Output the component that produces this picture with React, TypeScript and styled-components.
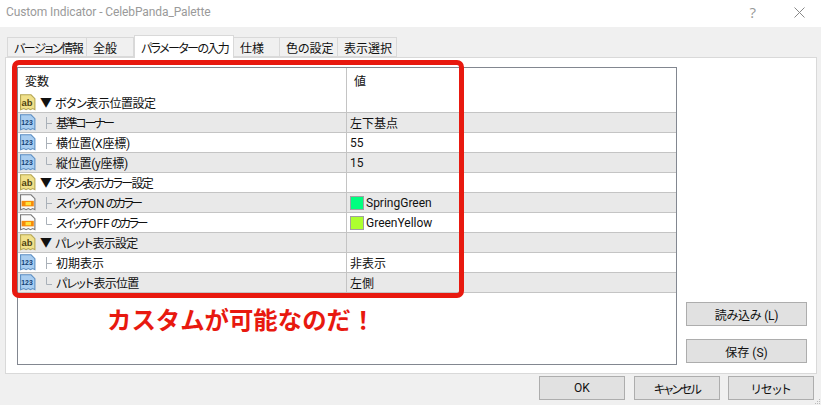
import styled, { createGlobalStyle } from "styled-components";

const GlobalStyle = createGlobalStyle`
  html, body {
    margin: 0;
    padding: 0;
    background: #f0f0f0;
  }
  * {
    box-sizing: border-box;
  }
`;

const JP = `Roboto, "Noto Sans CJK JP", "Noto Sans", sans-serif`;

const Dialog = styled.div`
  width: 821px;
  height: 405px;
  position: relative;
  overflow: hidden;
  display: flex;
  flex-direction: column;
  background: #f0f0f0;
  font-family: ${JP};
  font-feature-settings: "palt";
  font-size: 12px;
  color: #111;
`;

const TitleBar = styled.div`
  height: 27px;
  flex: none;
  background: #fff;
  display: flex;
  align-items: center;
  padding: 0 16px 3px 6px;
`;

const Title = styled.div`
  flex: 1;
  font-family: Roboto, sans-serif;
  font-size: 12px;
  letter-spacing: -0.1px;
  color: #9a9a9a;
`;

const HelpMark = styled.span`
  font-family: "Open Sans", sans-serif;
  font-size: 15px;
  color: #999;
  margin-right: 38px;
`;

const TabRow = styled.div`
  height: 30px;
  flex: none;
  display: flex;
  align-items: flex-end;
  padding-left: 7px;
  position: relative;
  z-index: 1;
`;

const Tab = styled.div<{ $w: number; $active?: boolean; $track?: number }>`
  width: ${(p) => p.$w}px;
  height: ${(p) => (p.$active ? 23 : 20)}px;
  margin-bottom: ${(p) => (p.$active ? -1 : 0)}px;
  padding-left: 6px;
  background: ${(p) => (p.$active ? "#fff" : "#f0f0f0")};
  border: 1px solid #d9d9d9;
  border-bottom: ${(p) => (p.$active ? "none" : "1px solid #d9d9d9")};
  border-left: ${(p) => (p.$active ? "1px solid #d9d9d9" : "none")};
  display: flex;
  align-items: center;
  white-space: nowrap;
  font-size: 12px;
  letter-spacing: ${(p) => p.$track ?? 0}px;
  &:first-child {
    border-left: 1px solid #d9d9d9;
  }
`;

const Panel = styled.div`
  width: 812px;
  height: 317px;
  margin-left: 5px;
  flex: none;
  background: #fff;
  border: 1px solid #d9d9d9;
  display: flex;
  padding: 9px 9px 8px 11px;
`;

const ListBox = styled.div`
  width: 660px;
  height: 298px;
  flex: none;
  border: 1px solid #828790;
  display: flex;
  flex-direction: column;
`;

const HeaderRow = styled.div`
  height: 25px;
  flex: none;
  display: flex;
  align-items: center;
`;

const Row = styled.div<{ $shade?: boolean }>`
  height: 20px;
  flex: none;
  display: flex;
  align-items: stretch;
  background: ${(p) => (p.$shade ? "#e9e9e9" : "#fff")};
  border-bottom: 1px solid #c4c4c4;
`;

const NameCell = styled.div`
  width: 328px;
  flex: none;
  display: flex;
  align-items: center;
  padding-left: 2px;
  white-space: nowrap;
`;

const HeadName = styled(NameCell)`
  padding-left: 7px;
  height: 100%;
`;

const NameText = styled.span<{ $track?: number }>`
  letter-spacing: ${(p) => p.$track ?? 0}px;
`;

const Latin = styled.span`
  letter-spacing: 0;
  margin-right: 1px;
`;

const ValueCell = styled.div`
  flex: 0 0 auto;
  width: 330px;
  border-left: 1px solid #c4c4c4;
  display: flex;
  align-items: center;
  padding-left: 3px;
  white-space: nowrap;
`;

const HeadValue = styled(ValueCell)`
  padding-left: 7px;
  height: 100%;
`;

const Triangle = styled.span`
  font-size: 12px;
  width: 15px;
  margin-left: 4px;
  display: inline-block;
  line-height: 1;
`;

const Swatch = styled.span<{ $color: string }>`
  width: 14px;
  height: 14px;
  flex: none;
  margin-right: 2px;
  background: ${(p) => p.$color};
  border: 1px solid #a0a0a0;
`;

const Side = styled.div`
  flex: 1;
  display: flex;
  flex-direction: column;
  align-items: flex-end;
  justify-content: flex-end;
  gap: 13px;
  padding-bottom: 2px;
`;

const Button = styled.div<{ $w: number; $track?: number }>`
  width: ${(p) => p.$w}px;
  height: 24px;
  background: #e1e1e1;
  border: 1px solid #adadad;
  display: flex;
  align-items: center;
  justify-content: center;
  font-size: 12px;
  letter-spacing: ${(p) => p.$track ?? 0}px;
  white-space: nowrap;
`;

const Footer = styled.div`
  flex: 1;
  display: flex;
  gap: 8px;
  padding: 2px 7px 0 0;
  justify-content: flex-end;
  & > :first-child {
    margin-right: 1px;
  }
`;

const Callout = styled.div`
  position: absolute;
  left: 12px;
  top: 60px;
  width: 452px;
  height: 238px;
  border: 5px solid #e8190f;
  border-radius: 7px;
  pointer-events: none;
  z-index: 2;
`;

const Note = styled.div`
  position: absolute;
  left: 107px;
  top: 304px;
  font-size: 24.4px;
  font-weight: 700;
  font-feature-settings: normal;
  color: #e8190f;
  white-space: nowrap;
  line-height: 34px;
`;

const Grip = styled.svg`
  position: absolute;
  right: 0;
  bottom: 0;
`;

const IconText = styled.text`
  font-family: "Liberation Sans", sans-serif;
  font-weight: 700;
`;

function DocShape({ fill, stroke }: { fill: string; stroke: string }) {
  return (
    <path
      d="M1.5 1.5H11L14.5 5V15L12.5 14L10.5 15L8.5 14L6.5 15L4.5 14L1.5 15Z"
      fill={fill}
      stroke={stroke}
    />
  );
}

function TextIcon() {
  return (
    <svg width="16" height="17" viewBox="1 1 14.5 15" style={{ flex: "none" }}>
      <DocShape fill="#f0e08a" stroke="#b5a653" />
      <IconText x="2.4" y="11.3" fontSize="8.5" fill="#4c4210">
        ab
      </IconText>
    </svg>
  );
}

function NumberIcon() {
  return (
    <svg width="16" height="17" viewBox="1 1 14.5 15" style={{ flex: "none" }}>
      <DocShape fill="#a9cdf0" stroke="#5d8fc4" />
      <IconText x="2.2" y="11" fontSize="6.2" fill="#123f75">
        123
      </IconText>
    </svg>
  );
}

function ColorIcon() {
  return (
    <svg width="16" height="17" viewBox="1 1 14.5 15" style={{ flex: "none" }}>
      <DocShape fill="#fafafa" stroke="#777" />
      <rect x="2.5" y="7" width="11" height="5" fill="#f58a0b" />
      <rect x="6" y="8" width="5" height="3" fill="#ffe23a" />
    </svg>
  );
}

function TreeMark({ last }: { last?: boolean }) {
  return (
    <svg width="12" height="14" viewBox="0 0 12 14" style={{ flex: "none", marginLeft: 8 }}>
      <path d={last ? "M2.5 1V8.5H8" : "M2.5 1V13M2.5 7.5H8"} stroke="#a9b0b8" fill="none" />
    </svg>
  );
}

type Item =
  | { kind: "group"; name: string; track: number }
  | { kind: "num" | "color"; name: string; track: number; value: string; last?: boolean; swatch?: string };

const items: Item[] = [
  { kind: "group", name: "ボタン表示位置設定", track: -0.45 },
  { kind: "num", name: "基準コーナー", track: -2.3, value: "左下基点" },
  { kind: "num", name: "横位置(X座標)", track: -0.25, value: "55" },
  { kind: "num", name: "縦位置(y座標)", track: -0.25, value: "15", last: true },
  { kind: "group", name: "ボタン表示カラー設定", track: -1.7 },
  { kind: "color", name: "スイッチONのカラー", track: -2.5, value: "SpringGreen", swatch: "#00ff7f" },
  { kind: "color", name: "スイッチOFFのカラー", track: -2.4, value: "GreenYellow", swatch: "#adff2f", last: true },
  { kind: "group", name: "パレット表示設定", track: -0.75 },
  { kind: "num", name: "初期表示", track: 0, value: "非表示" },
  { kind: "num", name: "パレット表示位置", track: -0.75, value: "左側", last: true },
];

const tabs = [
  { label: "バージョン情報", w: 80, track: -1.4 },
  { label: "全般", w: 47 },
  { label: "パラメーターの入力", w: 100, active: true, track: -1.6 },
  { label: "仕様", w: 46 },
  { label: "色の設定", w: 58 },
  { label: "表示選択", w: 59 },
];

// ON / OFF keep normal spacing, only the kana around them are tightened
function renderName(name: string) {
  return name
    .split(/(ON|OFF)/)
    .map((part, i) => (i % 2 === 1 ? <Latin key={part}>{part}</Latin> : part));
}

export default function App() {
  return (
    <Dialog>
      <GlobalStyle />
      <TitleBar>
        <Title>Custom Indicator - CelebPanda_Palette</Title>
        <HelpMark>?</HelpMark>
        <svg width="11" height="11" viewBox="0 0 11 11">
          <path d="M0.5 0.5L10.5 10.5M10.5 0.5L0.5 10.5" stroke="#888" fill="none" />
        </svg>
      </TitleBar>
      <TabRow>
        {tabs.map((t) => (
          <Tab key={t.label} $w={t.w} $active={t.active} $track={t.track}>
            {t.label}
          </Tab>
        ))}
      </TabRow>
      <Panel>
        <ListBox>
          <HeaderRow>
            <HeadName>変数</HeadName>
            <HeadValue>値</HeadValue>
          </HeaderRow>
          {items.map((item, i) => (
            <Row key={item.name} $shade={i % 2 === 1}>
              <NameCell>
                {item.kind === "group" ? <TextIcon /> : item.kind === "num" ? <NumberIcon /> : <ColorIcon />}
                {item.kind === "group" ? <Triangle>▼</Triangle> : <TreeMark last={item.last} />}
                <NameText $track={item.track}>{renderName(item.name)}</NameText>
              </NameCell>
              <ValueCell>
                {item.kind !== "group" && item.swatch && <Swatch $color={item.swatch} />}
                {item.kind !== "group" && item.value}
              </ValueCell>
            </Row>
          ))}
        </ListBox>
        <Side>
          <Button $w={121} $track={-0.2}>読み込み (L)</Button>
          <Button $w={121}>保存 (S)</Button>
        </Side>
      </Panel>
      <Footer>
        <Button $w={86}>OK</Button>
        <Button $w={86} $track={-1.6}>キャンセル</Button>
        <Button $w={86}>リセット</Button>
      </Footer>
      <Callout />
      <Note>カスタムが可能なのだ！</Note>
      <Grip width="7" height="7" viewBox="0 0 7 7">
        <path d="M5 1h1v1H5zM3 3h1v1H3zM5 3h1v1H5zM1 5h1v1H1zM3 5h1v1H3zM5 5h1v1H5z" fill="#bbb" />
      </Grip>
    </Dialog>
  );
}
